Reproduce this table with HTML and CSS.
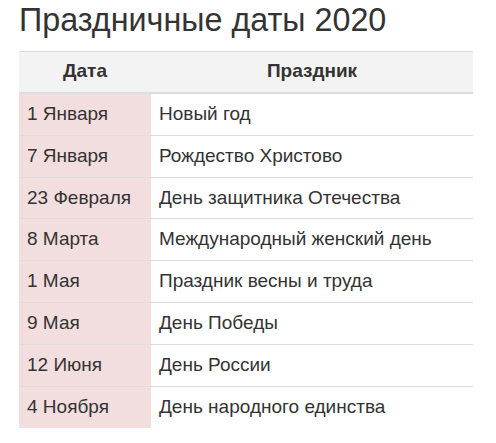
FILE: index.html
```html
<!DOCTYPE html>
<html lang="ru">
<head>
<meta charset="utf-8">
<title>Праздничные даты 2020</title>
<link rel="stylesheet" href="styles.css">
</head>
<body>
<div class="page">
  <h1 class="title">Праздничные даты 2020</h1>
  <table class="holidays">
    <thead>
      <tr><th>Дата</th><th>Праздник</th></tr>
    </thead>
    <tbody>
      <tr><td class="date">1 Января</td><td>Новый год</td></tr>
      <tr><td class="date">7 Января</td><td>Рождество Христово</td></tr>
      <tr><td class="date">23 Февраля</td><td>День защитника Отечества</td></tr>
      <tr><td class="date">8 Марта</td><td>Международный женский день</td></tr>
      <tr><td class="date">1 Мая</td><td>Праздник весны и труда</td></tr>
      <tr><td class="date">9 Мая</td><td>День Победы</td></tr>
      <tr><td class="date">12 Июня</td><td>День России</td></tr>
      <tr><td class="date">4 Ноября</td><td>День народного единства</td></tr>
    </tbody>
  </table>
</div>
</body>
</html>
```
FILE: styles.css
```css
html, body {
  margin: 0;
  padding: 0;
  background: #fff;
}
body {
  font-family: "Liberation Sans", Arial, sans-serif;
  color: #333;
}
.page {
  padding: 0 19px;
}
.title {
  margin: 0;
  padding-top: 2px;
  font-size: 32.3px;
  font-weight: normal;
  line-height: 37px;
  height: 49px;
}
.holidays {
  width: 454px;
  border-collapse: collapse;
  font-size: 19px;
}
.holidays th,
.holidays td {
  padding: 8px;
  line-height: 24.85px;
  text-align: left;
  border-top: 1px solid #ddd;
}
.holidays th {
  padding: 7px 8px 8px;
  background: #f3f3f3;
  text-align: center;
  font-weight: bold;
  border-bottom: 2px solid #ddd;
}
.holidays td.date {
  background: #f2dede;
  width: 116px;
}
```
